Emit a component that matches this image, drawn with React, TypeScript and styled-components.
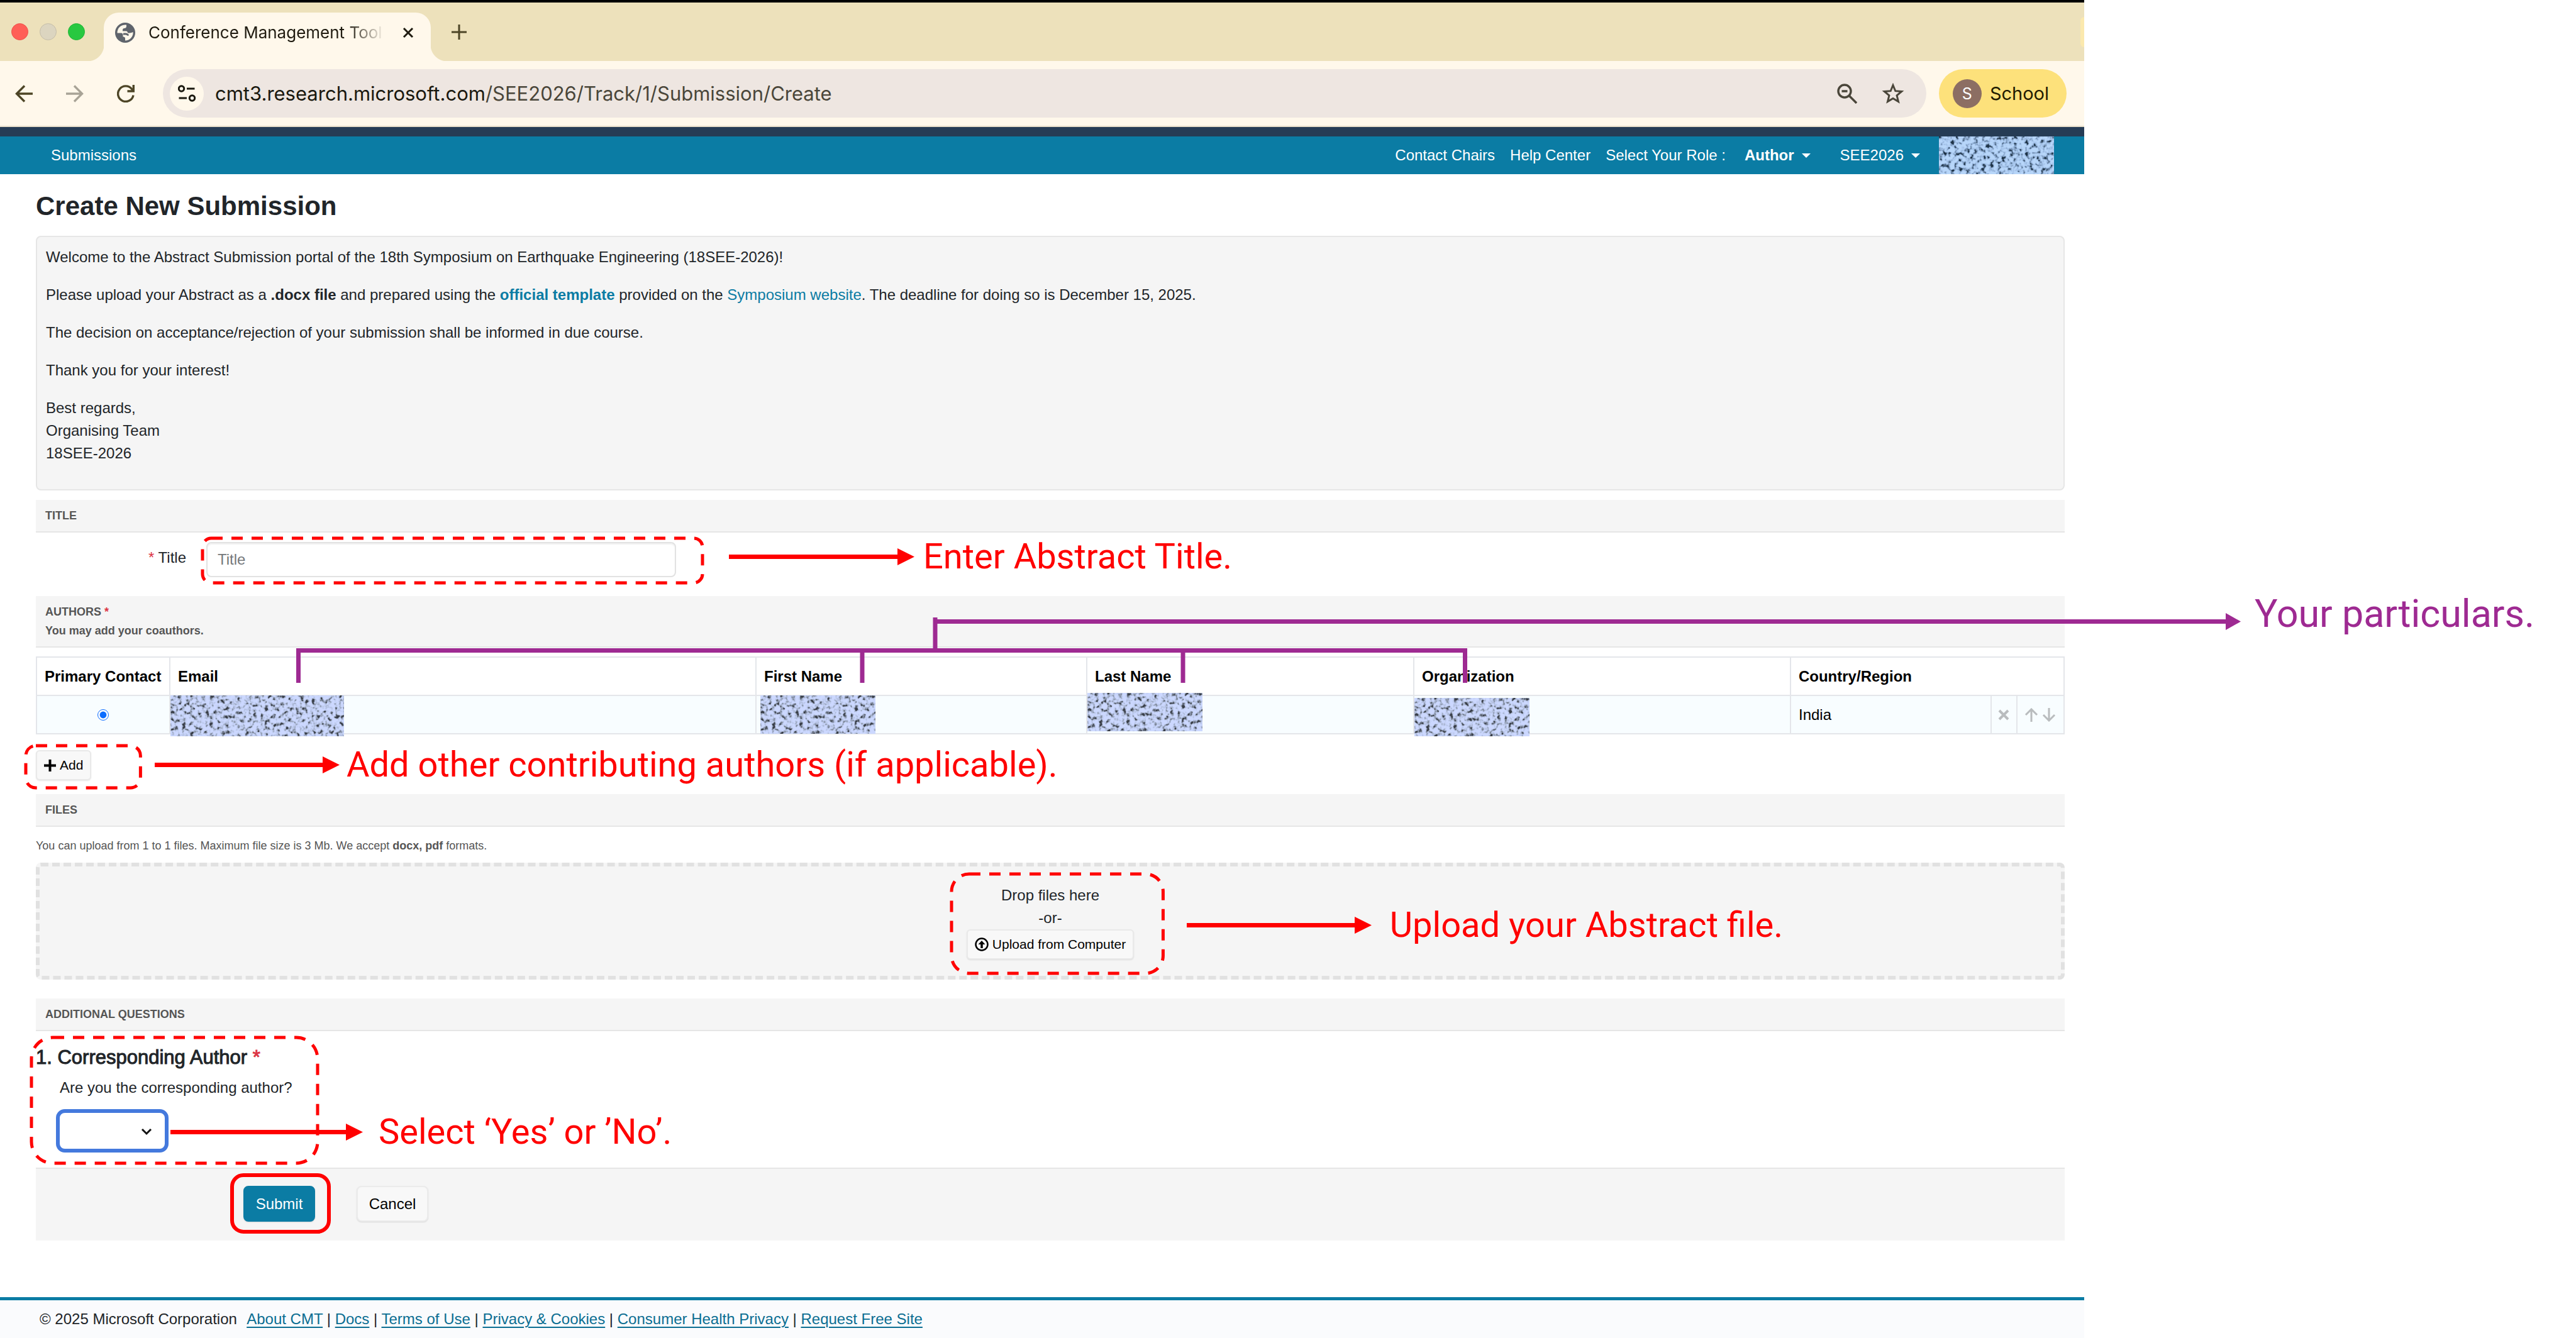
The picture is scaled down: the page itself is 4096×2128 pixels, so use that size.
import React from "react";
import styled, { createGlobalStyle } from "styled-components";

const RED = "#ff0000";
const PURPLE = "#9e2a92";
const TEAL = "#0b7ca4";
const RULE = "#e4e6ea";
const PANEL = "#f5f5f5";

const GlobalStyle = createGlobalStyle`
  *, *::before, *::after { box-sizing: border-box; }
  body {
    margin: 0;
    background: #fff;
    color: #212529;
    font: 24px/36px "Liberation Sans", Arial, sans-serif;
    overflow-x: hidden;
  }
  p, h1, h2, h3 { margin: 0; }
  button, input, select { font: inherit; color: inherit; }
`;

/* ---------- page frame ---------- */

const Slide = styled.div`
  display: grid;
  grid-template-columns: minmax(0, 1fr) 782px;
  min-height: 100vh;
`;

const Browser = styled.div`
  display: flex;
  flex-direction: column;
  border-top: 4px solid #000;
`;

/* ---------- browser chrome ---------- */

const TabStrip = styled.div`
  display: flex;
  align-items: center;
  height: 93px;
  padding-left: 18px;
  background: #ede1bb;
  font-family: Inter, Roboto, sans-serif;
`;

const Lights = styled.div`
  display: flex;
  gap: 18px;
`;

const Light = styled.span<{ $color: string; $edge: string }>`
  width: 27px;
  height: 27px;
  border: 1px solid ${(p) => p.$edge};
  border-radius: 50%;
  background: ${(p) => p.$color};
`;

const Tab = styled.div`
  position: relative;
  display: flex;
  align-items: center;
  align-self: flex-end;
  width: 520px;
  height: 77px;
  margin-left: 30px;
  padding: 0 27px 14px 18px;
  border-radius: 24px 24px 0 0;
  background: #fff8eb;
  color: #1f1b10;
  font-size: 26px;
  &::before,
  &::after {
    content: "";
    position: absolute;
    bottom: 0;
    width: 26px;
    height: 26px;
  }
  &::before {
    right: 100%;
    background: radial-gradient(circle at 0 0, transparent 26px, #fff8eb 27px);
  }
  &::after {
    left: 100%;
    background: radial-gradient(circle at 100% 0, transparent 26px, #fff8eb 27px);
  }
`;

const TabTitle = styled.span`
  flex: 1;
  min-width: 0;
  margin: 0 28px 0 21px;
  overflow: hidden;
  white-space: nowrap;
  mask-image: linear-gradient(90deg, #000 84%, transparent);
`;

const IconButton = styled.button`
  display: flex;
  flex: none;
  padding: 0;
  border: 0;
  background: none;
`;

const NewTab = styled(IconButton)`
  margin-left: 33px;
`;

const TabSearch = styled.span`
  width: 6px;
  height: 48px;
  margin-left: auto;
  border-radius: 12px 0 0 12px;
  background: #fbe9ae;
`;

const Toolbar = styled.div`
  display: flex;
  align-items: center;
  gap: 20px;
  height: 105px;
  padding: 0 28px 0 24px;
  border-bottom: 2px solid #e9e0cc;
  background: #fff8eb;
  font-family: Inter, Roboto, sans-serif;
`;

const History = styled.div`
  display: flex;
  gap: 53px;
  margin-right: 25px;
`;

const AddressBar = styled.div`
  display: flex;
  flex: 1;
  align-items: center;
  height: 77px;
  padding: 0 35px 0 11px;
  border-radius: 39px;
  background: #eee6e1;
  color: #4a463a;
  font-size: 31px;
`;

const SiteInfo = styled(IconButton)`
  align-items: center;
  justify-content: center;
  width: 54px;
  height: 54px;
  margin-right: 18px;
  border-radius: 50%;
  background: #fff8eb;
`;

const Host = styled.span`
  color: #1a180f;
`;

const AddressTools = styled.div`
  display: flex;
  align-items: center;
  gap: 39px;
  margin-left: auto;
`;

const Profile = styled.button`
  display: flex;
  align-items: center;
  gap: 13px;
  height: 77px;
  padding: 0 28px 0 22px;
  border: 0;
  border-radius: 39px;
  background: #fde17b;
  color: #211b00;
  font-size: 29px;
`;

const Avatar = styled.span`
  display: flex;
  align-items: center;
  justify-content: center;
  width: 46px;
  height: 46px;
  border-radius: 50%;
  background: #8c6e63;
  color: #fff;
  font-size: 25px;
`;

/* ---------- site navigation ---------- */

const NavBar = styled.nav`
  display: flex;
  align-items: center;
  justify-content: space-between;
  height: 75px;
  padding: 0 48px 0 81px;
  border-top: 15px solid #263c55;
  background: ${TEAL};
  color: #fff;
  white-space: nowrap;
`;

const NavGroup = styled.div<{ $gap: number }>`
  display: flex;
  align-items: center;
  gap: ${(p) => p.$gap}px;
`;

const NavLink = styled.a`
  color: #fff;
  text-decoration: none;
`;

const NavMenu = styled.button<{ $bold?: boolean }>`
  display: flex;
  align-items: center;
  gap: 12px;
  padding: 0;
  border: 0;
  background: none;
  color: #fff;
  font-weight: ${(p) => (p.$bold ? 700 : 400)};
  &::after {
    content: "";
    border: 7px solid transparent;
    border-top-color: #fff;
    border-bottom-width: 0;
  }
`;

/* ---------- form ---------- */

const Main = styled.main`
  padding: 27px 31px 0 57px;
`;

const PageTitle = styled.h1`
  margin-bottom: 23px;
  font-size: 42px;
  line-height: 48px;
`;

const Well = styled.section`
  margin-bottom: 15px;
  padding: 14px 14px 15px;
  border: 2px solid #e6e6e6;
  border-radius: 8px;
  background: ${PANEL};
  p {
    margin-bottom: 24px;
  }
`;

const TextLink = styled.a`
  color: ${TEAL};
  text-decoration: none;
`;

const SectionHead = styled.header`
  padding: 10px 15px;
  border-bottom: 2px solid #e6e6e6;
  background: ${PANEL};
  color: #555;
  font-size: 18px;
  line-height: 30px;
  h2 {
    font-size: 18px;
  }
  strong {
    display: block;
  }
`;

const Star = styled.span`
  color: #dc3545;
`;

const TitleRow = styled.div`
  display: grid;
  grid-template-columns: 239px 747px;
  gap: 32px;
  align-items: center;
  padding: 15px 0 30px;
`;

const TitleLabel = styled.label`
  padding-bottom: 6px;
  text-align: right;
`;

const TextInput = styled.input`
  display: block;
  width: 100%;
  height: 56px;
  padding: 0 16px;
  border: 2px solid #e2e2e2;
  border-radius: 8px;
  background: #fff;
  box-shadow: inset 0 2px 2px rgba(0, 0, 0, 0.06);
  &::placeholder {
    color: #75787b;
    opacity: 1;
  }
`;

const Authors = styled.section`
  position: relative;
  padding-bottom: 22px;
`;

const AuthorTable = styled.table`
  width: 100%;
  margin: 14px 0 25px;
  border-collapse: collapse;
  table-layout: fixed;
  color: #000;
  th,
  td {
    position: relative;
    height: 61px;
    padding: 0 12px;
    border: 2px solid ${RULE};
    text-align: left;
    white-space: nowrap;
  }
  td {
    background: #f8fdff;
  }
`;

const Col = styled.col<{ $w: number }>`
  width: ${(p) => p.$w}px;
`;

const ToolCell = styled.td`
  && {
    padding: 0;
  }
`;

const ToolGroup = styled.div`
  display: flex;
  align-items: center;
  justify-content: center;
  gap: 6px;
`;

const Radio = styled.input`
  display: block;
  width: 18px;
  height: 18px;
  margin: 0 auto;
  accent-color: #0a6cff;
`;

const FilterDefs = styled.svg`
  position: absolute;
  width: 0;
  height: 0;
`;

const Redaction = styled.svg<{ $w: number; $h: number }>`
  display: block;
  flex: none;
  width: ${(p) => p.$w}px;
  height: ${(p) => p.$h}px;
`;

const CellRedaction = styled(Redaction)<{ $top: number; $left: number }>`
  position: absolute;
  left: ${(p) => p.$left}px;
  top: ${(p) => p.$top}px;
`;

const SmallButton = styled.button`
  display: flex;
  align-items: center;
  gap: 6px;
  height: 48px;
  padding: 0 11px;
  border: 2px solid #e9e9e9;
  border-radius: 6px;
  background: #f8f8f8;
  box-shadow: 0 1px 2px rgba(0, 0, 0, 0.1);
  color: #000;
  font-size: 21px;
  line-height: 30px;
`;

const FileNote = styled.p`
  padding: 15px 0 12px;
  color: #555;
  font-size: 18px;
  line-height: 30px;
`;

const DropZone = styled.div`
  display: flex;
  justify-content: center;
  margin-bottom: 30px;
  padding: 28px 0 26px;
  border: 6px dashed #e1e1e1;
  border-radius: 8px;
  background: ${PANEL};
`;

const Question = styled.div`
  position: relative;
  width: 451px;
  padding: 22px 0 30px;
`;

const QuestionTitle = styled.h3`
  font-size: 31px;
  line-height: 40px;
  font-weight: 400;
  -webkit-text-stroke: 1px currentColor;
`;

const QuestionBody = styled.div`
  padding: 10px 0 0 38px;
`;

const SelectBox = styled.select`
  display: block;
  width: 167px;
  height: 57px;
  appearance: none;
  border: 0;
  border-radius: 8px;
  background: #fff;
  outline: 6px solid #4479dd;
`;

const SelectChevron = styled.svg`
  position: absolute;
  right: 20px;
  top: 24px;
  pointer-events: none;
`;

const Actions = styled.div`
  display: flex;
  gap: 66px;
  padding: 27px 0 30px 330px;
  border-top: 2px solid #e6e6e6;
  background: ${PANEL};
`;

const Button = styled.button<{ $primary?: boolean }>`
  width: 114px;
  height: 57px;
  padding: 0;
  border: 2px solid ${(p) => (p.$primary ? TEAL : "#ebebeb")};
  border-radius: 8px;
  background: ${(p) => (p.$primary ? TEAL : "#f8f8f8")};
  box-shadow: 0 1px 2px rgba(0, 0, 0, 0.12);
  color: ${(p) => (p.$primary ? "#fff" : "#000")};
`;

const Footer = styled.footer`
  margin-top: auto;
  height: 65px;
  padding: 12px 63px;
  border-top: 5px solid ${TEAL};
  background: #fafbfd;
  a {
    color: #0b6e92;
    text-underline-offset: 4px;
    text-decoration-thickness: 2px;
  }
`;

const Copyright = styled.span`
  margin-right: 10px;
`;

/* ---------- tutorial mark-up laid over the page ---------- */

const Marked = styled.div<{ $top?: number }>`
  position: relative;
  width: fit-content;
  margin-top: ${(p) => p.$top ?? 0}px;
`;

const MarkedField = styled.div`
  position: relative;
`;

const UploadStack = styled(Marked)`
  text-align: center;
`;

const FrameBox = styled.div<{ $inset: string }>`
  position: absolute;
  inset: ${(p) => p.$inset};
  pointer-events: none;
  svg {
    display: block;
    width: 100%;
    height: 100%;
    overflow: visible;
  }
  rect {
    x: 3px;
    y: 3px;
    width: calc(100% - 6px);
    height: calc(100% - 6px);
    fill: none;
    stroke: ${RED};
  }
`;

const Callout = styled.div<{ $left: number; $top: number; $gap: number }>`
  position: absolute;
  left: ${(p) => p.$left}px;
  top: ${(p) => p.$top}px;
  display: flex;
  align-items: center;
  gap: ${(p) => p.$gap}px;
  height: 68px;
  color: ${RED};
  pointer-events: none;
`;

const CalloutText = styled.span`
  font-family: Roboto, "Open Sans", sans-serif;
  font-size: 56px;
  line-height: 68px;
  white-space: nowrap;
`;

const Bracket = styled.svg`
  position: absolute;
  left: 0;
  top: 0;
  overflow: visible;
  pointer-events: none;
`;

const Particulars = styled(CalloutText)`
  position: absolute;
  left: 3528px;
  top: -6px;
  color: ${PURPLE};
  font-size: 61px;
`;

function Outline({ inset, radius, solid }: { inset: string; radius: number; solid?: boolean }) {
  return (
    <FrameBox $inset={inset} aria-hidden="true">
      <svg>
        <rect rx={radius} strokeWidth={solid ? 6 : 5} strokeDasharray={solid ? undefined : "18 14"} />
      </svg>
    </FrameBox>
  );
}

function Arrow({ length }: { length: number }) {
  return (
    <svg width={length} height="27" aria-hidden="true">
      <path d={`M0 13.5H${length - 24}`} stroke="currentColor" strokeWidth="7" />
      <path d={`M${length - 27} 0L${length} 13.5L${length - 27} 27Z`} fill="currentColor" />
    </svg>
  );
}

function Note(props: { left: number; top: number; length: number; gap: number; children: React.ReactNode }) {
  return (
    <Callout $left={props.left} $top={props.top} $gap={props.gap}>
      <Arrow length={props.length} />
      <CalloutText>{props.children}</CalloutText>
    </Callout>
  );
}

const grayNoise = "2.6 0 0 0 -0.65  2.6 0 0 0 -0.65  2.6 0 0 0 -0.65  0 0 0 0 1";

function NoiseDefs() {
  return (
    <FilterDefs aria-hidden="true">
      <filter id="noise-lavender" x="0" y="0" width="100%" height="100%" colorInterpolationFilters="sRGB">
        <feTurbulence type="fractalNoise" baseFrequency="0.16" numOctaves="2" seed="4" />
        <feColorMatrix values={grayNoise} />
        <feComponentTransfer>
          <feFuncR type="table" tableValues="0.22 0.52 0.7 0.78 0.8" />
          <feFuncG type="table" tableValues="0.24 0.56 0.75 0.83 0.85" />
          <feFuncB type="table" tableValues="0.28 0.64 0.87 0.98 1" />
        </feComponentTransfer>
      </filter>
      <filter id="noise-blue" x="0" y="0" width="100%" height="100%" colorInterpolationFilters="sRGB">
        <feTurbulence type="fractalNoise" baseFrequency="0.16" numOctaves="2" seed="9" />
        <feColorMatrix values={grayNoise} />
        <feComponentTransfer>
          <feFuncR type="table" tableValues="0.12 0.42 0.6 0.69 0.72" />
          <feFuncG type="table" tableValues="0.2 0.53 0.72 0.81 0.84" />
          <feFuncB type="table" tableValues="0.28 0.66 0.87 0.96 0.98" />
        </feComponentTransfer>
      </filter>
    </FilterDefs>
  );
}

const authorMasks = [
  { w: 276, h: 65, left: 0, top: -1 },
  { w: 183, h: 61, left: 6, top: -1 },
  { w: 183, h: 61, left: 0, top: -5 },
  { w: 183, h: 61, left: 0, top: 3 },
];

const footerLinks = ["About CMT", "Docs", "Terms of Use", "Privacy & Cookies", "Consumer Health Privacy", "Request Free Site"];

function BrowserChrome() {
  return (
    <>
      <TabStrip>
        <Lights>
          <Light $color="#ff5f57" $edge="#ee5049" />
          <Light $color="#dcd5c0" $edge="#c4bda9" />
          <Light $color="#28c840" $edge="#1fb535" />
        </Lights>
        <Tab>
          <svg width="32" height="32" viewBox="0 0 32 32" aria-hidden="true">
            <circle cx="16" cy="16" r="16" fill="#5f646c" />
            <path
              d="M3.500 16.500A12.500 12.500 0 0 1 18 3.600V6c0 2-1.500 3-3.500 3S12 10.500 12 12.500v1h5.500c2 0 2.500 1.500 2.500 3h3.500c2 0 3-1 5-1.500A12.500 12.500 0 0 1 16 28.500V25c0-2-2-2.500-3.500-2.500V19c0-1.500-1-2.500-3-2.500Z"
              fill="#fff8eb"
            />
            <path d="M13 18h4.500c1.500 0 2 1.500 4 1.500" stroke="#5f646c" strokeWidth="3" fill="none" />
          </svg>
          <TabTitle>Conference Management Tool</TabTitle>
          <IconButton aria-label="Close tab">
            <svg width="18" height="18" viewBox="0 0 18 18">
              <path d="M2 2l14 14M16 2L2 16" stroke="#1f1b10" strokeWidth="3" />
            </svg>
          </IconButton>
        </Tab>
        <NewTab aria-label="New tab">
          <svg width="24" height="24" viewBox="0 0 24 24">
            <path d="M12 0v24M0 12h24" stroke="#4d4526" strokeWidth="3" />
          </svg>
        </NewTab>
        <TabSearch />
      </TabStrip>
      <Toolbar>
        <History>
          <IconButton aria-label="Back">
            <svg width="28" height="28" viewBox="0 0 28 28">
              <path d="M28 14H3M15 1.500L2.500 14L15 26.500" stroke="#4d4526" strokeWidth="3.400" fill="none" />
            </svg>
          </IconButton>
          <IconButton aria-label="Forward">
            <svg width="28" height="28" viewBox="0 0 28 28">
              <path d="M0 14h25M13 1.500L25.500 14L13 26.500" stroke="#a8a396" strokeWidth="3.400" fill="none" />
            </svg>
          </IconButton>
          <IconButton aria-label="Reload">
            <svg width="28" height="28" viewBox="0 0 28 28">
              <path d="M26 16.500A12.300 12.300 0 1 1 23.500 6.500L25 9" stroke="#4d4526" strokeWidth="3.400" fill="none" />
              <path d="M26.300 0v10H16.500" stroke="#4d4526" strokeWidth="3.400" fill="none" />
            </svg>
          </IconButton>
        </History>
        <AddressBar>
          <SiteInfo aria-label="Site information">
            <svg width="28" height="27" viewBox="0 0 28 27" fill="none" stroke="#1a180f" strokeWidth="3">
              <circle cx="5.500" cy="6" r="4.200" />
              <path d="M14 6h12.500M1.500 21H14" />
              <circle cx="22.500" cy="21" r="4.200" />
            </svg>
          </SiteInfo>
          <Host>cmt3.research.microsoft.com</Host>/SEE2026/Track/1/Submission/Create
          <AddressTools>
            <IconButton aria-label="Zoom">
              <svg width="32" height="32" viewBox="0 0 32 32" fill="none" stroke="#4a463a" strokeWidth="3.400">
                <circle cx="12" cy="12" r="10" />
                <path d="M7.500 12h9M19 19l12 12" />
              </svg>
            </IconButton>
            <IconButton aria-label="Bookmark this tab">
              <svg width="36" height="34" viewBox="0 0 36 34" fill="none" stroke="#4a463a" strokeWidth="3">
                <path d="M18 3.500l3.800 9.200 9.900.800-7.600 6.400 2.400 9.700-8.500-5.200-8.500 5.200 2.400-9.700-7.600-6.400 9.900-.8z" />
              </svg>
            </IconButton>
          </AddressTools>
        </AddressBar>
        <Profile>
          <Avatar>S</Avatar>School
        </Profile>
      </Toolbar>
    </>
  );
}

export default function App() {
  return (
    <>
      <GlobalStyle />
      <NoiseDefs />
      <Slide>
        <Browser>
          <BrowserChrome />
          <NavBar>
            <NavLink href="#submissions">Submissions</NavLink>
            <NavGroup $gap={30}>
              <NavGroup $gap={24}>
                <NavLink href="#chairs">Contact Chairs</NavLink>
                <NavLink href="#help">Help Center</NavLink>
                <span>Select Your Role :</span>
              </NavGroup>
              <NavGroup $gap={47}>
                <NavMenu $bold>Author</NavMenu>
                <NavMenu>SEE2026</NavMenu>
              </NavGroup>
              <Redaction $w={183} $h={60} aria-hidden="true">
                <rect width="100%" height="100%" filter="url(#noise-blue)" />
              </Redaction>
            </NavGroup>
          </NavBar>

          <Main>
            <PageTitle>Create New Submission</PageTitle>
            <Well>
              <p>Welcome to the Abstract Submission portal of the 18th Symposium on Earthquake Engineering (18SEE-2026)!</p>
              <p>
                Please upload your Abstract as a <b>.docx file</b> and prepared using the{" "}
                <TextLink href="#template">
                  <b>official template</b>
                </TextLink>{" "}
                provided on the <TextLink href="#website">Symposium website</TextLink>. The deadline for doing so is
                December 15, 2025.
              </p>
              <p>The decision on acceptance/rejection of your submission shall be informed in due course.</p>
              <p>Thank you for your interest!</p>
              <p>
                Best regards,
                <br />
                Organising Team
                <br />
                18SEE-2026
              </p>
            </Well>

            <SectionHead>
              <h2>TITLE</h2>
            </SectionHead>
            <TitleRow>
              <TitleLabel htmlFor="title">
                <Star>*</Star> Title
              </TitleLabel>
              <MarkedField>
                <TextInput id="title" placeholder="Title" />
                <Outline inset="-9px -45px -12px -9px" radius={14} />
                <Note left={831} top={-11} length={295} gap={14}>
                  Enter Abstract Title.
                </Note>
              </MarkedField>
            </TitleRow>

            <Authors>
              <SectionHead>
                <h2>
                  AUTHORS <Star>*</Star>
                </h2>
                <strong>You may add your coauthors.</strong>
              </SectionHead>
              <AuthorTable>
                <colgroup>
                  <Col $w={212} />
                  <col />
                  <Col $w={526} />
                  <Col $w={520} />
                  <Col $w={599} />
                  <Col $w={319} />
                  <Col $w={41} />
                  <Col $w={75} />
                </colgroup>
                <thead>
                  <tr>
                    <th>Primary Contact</th>
                    <th>Email</th>
                    <th>First Name</th>
                    <th>Last Name</th>
                    <th>Organization</th>
                    <th colSpan={3}>Country/Region</th>
                  </tr>
                </thead>
                <tbody>
                  <tr>
                    <td>
                      <Radio type="radio" name="primary" defaultChecked aria-label="Primary contact" />
                    </td>
                    {authorMasks.map((m, i) => (
                      <td key={i}>
                        <CellRedaction $w={m.w} $h={m.h} $left={m.left} $top={m.top} aria-hidden="true">
                          <rect width="100%" height="100%" filter="url(#noise-lavender)" />
                        </CellRedaction>
                      </td>
                    ))}
                    <td>India</td>
                    <ToolCell>
                      <ToolGroup>
                        <IconButton aria-label="Remove author">
                          <svg width="18" height="18" viewBox="0 0 18 18">
                            <path d="M2 2l14 14M16 2L2 16" stroke="#b9bcbe" strokeWidth="4" />
                          </svg>
                        </IconButton>
                      </ToolGroup>
                    </ToolCell>
                    <ToolCell>
                      <ToolGroup>
                        <IconButton aria-label="Move up">
                          <svg width="22" height="22" viewBox="0 0 22 22" fill="none" stroke="#b9bcbe" strokeWidth="3">
                            <path d="M11 22V3M2 11l9-9 9 9" />
                          </svg>
                        </IconButton>
                        <IconButton aria-label="Move down">
                          <svg width="22" height="22" viewBox="0 0 22 22" fill="none" stroke="#b9bcbe" strokeWidth="3">
                            <path d="M11 0v19M2 11l9 9 9-9" />
                          </svg>
                        </IconButton>
                      </ToolGroup>
                    </ToolCell>
                  </tr>
                </tbody>
              </AuthorTable>
              <Marked>
                <SmallButton>
                  <svg width="19" height="19" viewBox="0 0 19 19" aria-hidden="true">
                    <path d="M9.500 0v19M0 9.500h19" stroke="#000" strokeWidth="4" />
                  </svg>
                  Add
                </SmallButton>
                <Outline inset="-10px -81px -15px -19px" radius={16} />
                <Note left={189} top={-11} length={294} gap={11}>
                  Add other contributing authors (if applicable).
                </Note>
              </Marked>
              <Bracket width="3510" height="140" stroke={PURPLE} strokeWidth="7" fill="none" aria-hidden="true">
                <path d="M417.500 138V86.500H2272.500V138M1314 86V138M1824 86V138M1430 34V86M1430 40.500H3485" />
                <path d="M3482 27L3506 40.500L3482 54Z" fill={PURPLE} stroke="none" />
              </Bracket>
              <Particulars>Your particulars.</Particulars>
            </Authors>

            <SectionHead>
              <h2>FILES</h2>
            </SectionHead>
            <FileNote>
              You can upload from 1 to 1 files. Maximum file size is 3 Mb. We accept <b>docx, pdf</b> formats.
            </FileNote>
            <DropZone>
              <UploadStack>
                <p>Drop files here</p>
                <p>-or-</p>
                <SmallButton>
                  <svg width="22" height="22" viewBox="0 0 22 22" aria-hidden="true">
                    <circle cx="11" cy="11" r="9.500" fill="none" stroke="#000" strokeWidth="2.500" />
                    <path d="M11 17V9" stroke="#000" strokeWidth="3.500" />
                    <path d="M5.500 11L11 5l5.500 6z" />
                  </svg>
                  Upload from Computer
                </SmallButton>
                <Outline inset="-19px -49px -25px -27px" radius={28} />
                <Note left={350} top={31} length={294} gap={29}>
                  Upload your Abstract file.
                </Note>
              </UploadStack>
            </DropZone>

            <SectionHead>
              <h2>ADDITIONAL QUESTIONS</h2>
            </SectionHead>
            <Question>
              <Outline inset="7px 0 4px -10px" radius={34} />
              <QuestionTitle>
                1. Corresponding Author <Star>*</Star>
              </QuestionTitle>
              <QuestionBody>
                <label htmlFor="corresponding">Are you the corresponding author?</label>
                <Marked $top={22}>
                  <SelectBox id="corresponding" defaultValue="">
                    <option value=""></option>
                    <option>Yes</option>
                    <option>No</option>
                  </SelectBox>
                  <SelectChevron width="18" height="12" viewBox="0 0 18 12" aria-hidden="true">
                    <path d="M2 2l7 7 7-7" fill="none" stroke="#111" strokeWidth="3" />
                  </SelectChevron>
                  <Note left={176} top={-4} length={306} gap={25}>
                    Select ‘Yes’ or ’No’.
                  </Note>
                </Marked>
              </QuestionBody>
            </Question>
            <Actions>
              <Marked>
                <Button $primary>Submit</Button>
                <Outline inset="-20px -25px -19px -21px" radius={18} solid />
              </Marked>
              <Button>Cancel</Button>
            </Actions>
          </Main>

          <Footer>
            <Copyright>© 2025 Microsoft Corporation</Copyright>{" "}
            {footerLinks.map((label, i) => (
              <React.Fragment key={label}>
                {i > 0 && " | "}
                <a href="#footer">{label}</a>
              </React.Fragment>
            ))}
          </Footer>
        </Browser>
      </Slide>
    </>
  );
}
